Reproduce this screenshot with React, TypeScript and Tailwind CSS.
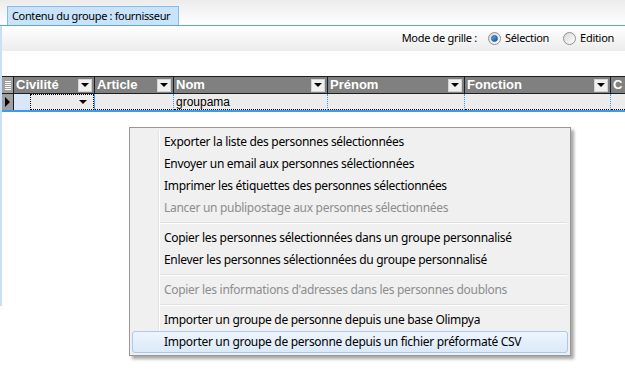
import { ReactNode } from "react";

const ui = { fontFamily: '"Noto Sans", "DejaVu Sans", sans-serif' };
const grid = { fontFamily: '"Liberation Sans", Arial, sans-serif' };

function DropBtn() {
    return (
        <div className="w-[14px] h-[13px] bg-[#f0f0f0] border border-[#d4d4d4] flex items-center justify-center">
            <div className="w-0 h-0 border-l-[4px] border-r-[4px] border-t-[4px] border-l-transparent border-r-transparent border-t-black" />
        </div>
    );
}

function Radio({ checked }: { checked?: boolean }) {
    return (
        <div className="w-[13px] h-[13px] rounded-full border border-[#8e8f8f] bg-gradient-to-br from-[#d8d8d8] to-white flex items-center justify-center">
            {checked && <div className="w-[7px] h-[7px] rounded-full bg-gradient-to-br from-[#5fb2f2] to-[#0b4f9c] border border-[#1b5fa5]" />}
        </div>
    );
}

const columns = [
    { label: "Civilité", w: "w-[81px]" },
    { label: "Article", w: "w-[79px]" },
    { label: "Nom", w: "w-[154px]" },
    { label: "Prénom", w: "w-[137px]" },
    { label: "Fonction", w: "w-[146px]" },
];

function MenuItem({ children, disabled, active }: { children: ReactNode; disabled?: boolean; active?: boolean }) {
    return (
        <div
            className={
                "h-[22px] flex items-center text-[12px] tracking-[-0.3px] whitespace-nowrap " +
                (disabled ? "text-[#8d8d8d] " : "text-black ") +
                (active ? "mx-[2px] pl-[31px] rounded-[3px] border border-[#a8c8ec] bg-gradient-to-b from-[#eef5fd] to-[#dbe9f9]" : "pl-[34px]")
            }
        >
            {children}
        </div>
    );
}

function Sep() {
    return (
        <div className="h-[8px] flex items-center pl-[30px] pr-[3px]">
            <div className="flex-1 h-[2px] border-t border-[#e0e0e0] border-b border-b-white" />
        </div>
    );
}

export default function App() {
    return (
        <div className="w-[625px] h-[376px] bg-white relative overflow-hidden flex flex-col" style={ui}>
            <div className="h-[25px] bg-gradient-to-b from-[#ececec] to-white flex items-end pl-[7px]">
                <div className="h-[19px] pl-[4px] pr-[8px] bg-[#c9e3fb] border border-b-0 border-[#84bdeb] text-[11px] tracking-[-0.35px] leading-[18px] text-black whitespace-nowrap">
                    Contenu du groupe : fournisseur
                </div>
            </div>
            <div className="flex-1 flex flex-col border-t border-[#5aa6e6]">
                <div className="flex-1 flex flex-col border-l-2 border-[#c7e0f7] mb-[70px]">
                    <div className="h-[25px] bg-gradient-to-b from-white to-[#ececec] flex items-center justify-end pr-[11px] text-[11px] tracking-[-0.3px] text-black">
                        <span className="mr-[11px]">Mode de grille :</span>
                        <Radio checked />
                        <span className="ml-[4px] mr-[14px]">Sélection</span>
                        <Radio />
                        <span className="ml-[4px]">Edition</span>
                    </div>
                    <div className="h-[25px] bg-white" />
                    <div className="flex flex-col" style={grid}>
                        <div className="h-[18px] flex bg-[#808080] border-y border-[#1e1e1e]">
                            <div className="w-[12px] border-r border-[#1e1e1e] flex flex-col items-center justify-center gap-[1px] bg-[#a0a0a0]">
                                <div className="w-[6px] h-[1px] bg-white" />
                                <div className="w-[6px] h-[1px] bg-white" />
                                <div className="w-[6px] h-[1px] bg-white" />
                                <div className="w-[6px] h-[1px] bg-white" />
                                <div className="w-[6px] h-[1px] bg-white" />
                            </div>
                            {columns.map((c) => (
                                <div key={c.label} className={c.w + " border-r border-[#1e1e1e] flex items-center justify-between pl-[2px] pr-[2px]"}>
                                    <span className="text-white font-bold text-[13px]">{c.label}</span>
                                    <DropBtn />
                                </div>
                            ))}
                            <div className="flex-1 pl-[2px] flex items-center">
                                <span className="text-white font-bold text-[13px]">C</span>
                            </div>
                        </div>
                        <div className="h-[18px] flex bg-[#ececec] border-b-2 border-[#3a9af0]">
                            <div className="w-[12px] bg-[#a0a0a0] border-r border-[#1e1e1e] flex items-center justify-center">
                                <div className="w-0 h-0 border-t-[5px] border-b-[5px] border-l-[5px] border-t-transparent border-b-transparent border-l-black" />
                            </div>
                            <div className="w-[81px] border-r border-[#3a9af0] flex">
                                <div className="w-[16px] bg-[#d8e8f8]" />
                                <div className="flex-1 border border-dotted border-black flex items-center justify-end pr-[6px]">
                                    <div className="w-0 h-0 border-l-[4px] border-r-[4px] border-t-[4px] border-l-transparent border-r-transparent border-t-black" />
                                </div>
                            </div>
                            <div className="w-[79px] border-r border-[#3a9af0] border-b border-dotted border-b-black" />
                            <div className="w-[154px] border-r border-[#3a9af0] border-b border-dotted border-b-black flex items-center pl-[2px] text-[12px] text-black">
                                groupama
                            </div>
                            <div className="w-[137px] border-r border-[#3a9af0] border-b border-dotted border-b-black" />
                            <div className="w-[146px] border-r border-[#3a9af0] border-b border-dotted border-b-black" />
                            <div className="flex-1 border-b border-dotted border-b-black" />
                        </div>
                    </div>
                </div>
            </div>

            <div className="absolute left-[129px] top-[127px] w-[442px] bg-[#f0f0f0] border border-[#979797] pt-[3px] pb-[2px] shadow-[3px_3px_3px_rgba(0,0,0,0.35)]">
                <div className="absolute left-[28px] top-[2px] bottom-[2px] w-[2px] border-l border-[#e2e3e3] border-r border-r-white" />
                <div className="relative flex flex-col">
                    <MenuItem>Exporter la liste des personnes sélectionnées</MenuItem>
                    <MenuItem>Envoyer un email aux personnes sélectionnées</MenuItem>
                    <MenuItem>Imprimer les étiquettes des personnes sélectionnées</MenuItem>
                    <MenuItem disabled>Lancer un publipostage aux personnes sélectionnées</MenuItem>
                    <Sep />
                    <MenuItem>Copier les personnes sélectionnées dans un groupe personnalisé</MenuItem>
                    <MenuItem>Enlever les personnes sélectionnées du groupe personnalisé</MenuItem>
                    <Sep />
                    <MenuItem disabled>Copier les informations d'adresses dans les personnes doublons</MenuItem>
                    <Sep />
                    <MenuItem>Importer un groupe de personne depuis une base Olimpya</MenuItem>
                    <MenuItem active>Importer un groupe de personne depuis un fichier préformaté CSV</MenuItem>
                </div>
            </div>
        </div>
    );
}
